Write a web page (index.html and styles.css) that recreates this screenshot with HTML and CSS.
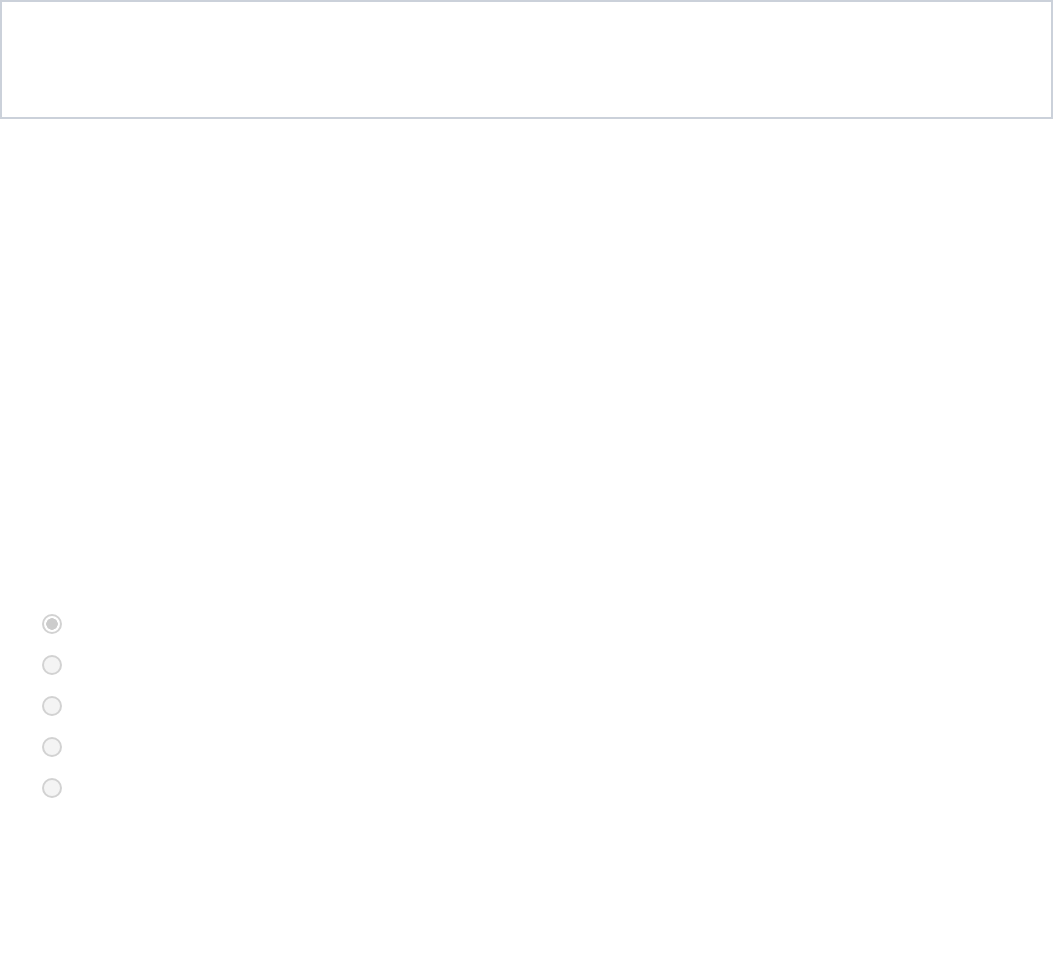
FILE: index.html
```html
<!DOCTYPE html>
<html>
<head>
<meta charset="utf-8">
<link rel="stylesheet" href="styles.css">
</head>
<body>
<div class="box"></div>
<div class="options">
  <input class="radio" type="radio" name="opt" checked disabled>
  <input class="radio" type="radio" name="opt" disabled>
  <input class="radio" type="radio" name="opt" disabled>
  <input class="radio" type="radio" name="opt" disabled>
  <input class="radio" type="radio" name="opt" disabled>
</div>
</body>
</html>
```
FILE: styles.css
```css
html, body {
  margin: 0;
  padding: 0;
  background: #ffffff;
  font-family: "Liberation Sans", Arial, sans-serif;
}
.box {
  box-sizing: border-box;
  width: 1053px;
  height: 119px;
  border: 2px solid #cbd1da;
  background: #ffffff;
}
.options {
  display: flex;
  flex-direction: column;
  gap: 21px;
  padding-top: 495px;
  padding-left: 42px;
}
.radio {
  -webkit-appearance: none;
  appearance: none;
  box-sizing: border-box;
  width: 20px;
  height: 20px;
  margin: 0;
  border: 2px solid #d2d2d2;
  border-radius: 50%;
  background: #f4f4f4;
}
.radio:checked {
  background: radial-gradient(circle, #cccccc 0 5.5px, #ffffff 6px);
}
```
